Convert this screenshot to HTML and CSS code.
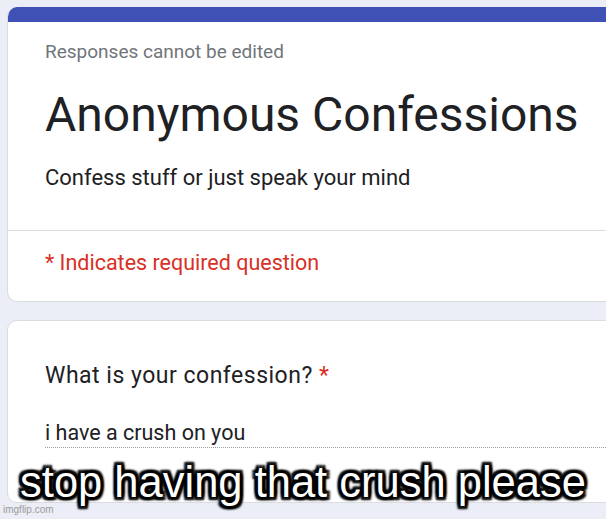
FILE: index.html
```html
<!DOCTYPE html>
<html lang="en">
<head>
<meta charset="utf-8">
<title>Anonymous Confessions</title>
<link rel="stylesheet" href="styles.css">
</head>
<body>
<div class="page">
  <section class="card header-card">
    <div class="accent"></div>
    <div class="header-body">
      <p class="notice">Responses cannot be edited</p>
      <h1 class="title">Anonymous Confessions</h1>
      <p class="desc">Confess stuff or just speak your mind</p>
    </div>
    <div class="required-row">
      <p class="required">* Indicates required question</p>
    </div>
  </section>

  <section class="card question-card">
    <p class="question">What is your confession? <span class="star">*</span></p>
    <div class="answer">i have a crush on you</div>
  </section>
</div>

<div class="caption">stop having that crush please</div>
<div class="watermark">imgflip.com</div>
</body>
</html>
```

FILE: styles.css
```css
html, body {
  margin: 0;
  padding: 0;
}

body {
  width: 606px;
  height: 519px;
  overflow: hidden;
  background: #ebeef7;
  position: relative;
  font-family: Roboto, "Noto Sans", sans-serif;
}

.page {
  padding: 7px 0 0 7px;
  display: flex;
  flex-direction: column;
  gap: 18px;
}

.card {
  width: 680px;
  background: #ffffff;
  border: 1px solid #dadce0;
  border-radius: 10px;
  box-sizing: border-box;
}

.header-card {
  border-top: none;
  overflow: hidden;
}

.accent {
  height: 15px;
  background: #3f51b5;
}

.header-body {
  padding: 18px 0 0 37px;
  border-bottom: 1px solid #dadce0;
}

.notice {
  margin: 0;
  font-size: 19px;
  line-height: 24px;
  color: #70757a;
}

.title {
  margin: 26px 0 0;
  font-size: 48px;
  line-height: 50px;
  font-weight: 400;
  color: #202124;
}

.desc {
  margin: 24px 0 0;
  padding-bottom: 38px;
  font-size: 22px;
  line-height: 28px;
  color: #202124;
}

.required-row {
  padding: 18px 0 24px 37px;
}

.required {
  margin: 0;
  font-size: 21.5px;
  line-height: 28px;
  color: #d93025;
}

.question-card {
  padding: 40px 0 54px 37px;
}

.question {
  margin: 0;
  font-size: 23px;
  letter-spacing: 0.5px;
  line-height: 30px;
  color: #202124;
}

.star {
  color: #d93025;
}

.answer {
  margin-top: 29px;
  padding-bottom: 1px;
  font-size: 21.5px;
  line-height: 26px;
  color: #202124;
  border-bottom: 1px dotted #9aa0a6;
}

.caption {
  position: absolute;
  left: 0;
  right: 0;
  top: 457px;
  text-align: center;
  font-family: "Liberation Sans", Arial, sans-serif;
  font-size: 43.5px;
  font-weight: 400;
  line-height: 50px;
  color: #ffffff;
  text-shadow:
    3px 3px 2px #000, -3px -3px 2px #000, 3px -3px 2px #000, -3px 3px 2px #000,
    0 3px 2px #000, 0 -3px 2px #000, 3px 0 2px #000, -3px 0 2px #000,
    0 0 5px #000;
}

.watermark {
  position: absolute;
  left: 3px;
  bottom: 3px;
  font-family: "Liberation Sans", Arial, sans-serif;
  font-size: 10px;
  line-height: 12px;
  color: #9a9a9a;
}
```
